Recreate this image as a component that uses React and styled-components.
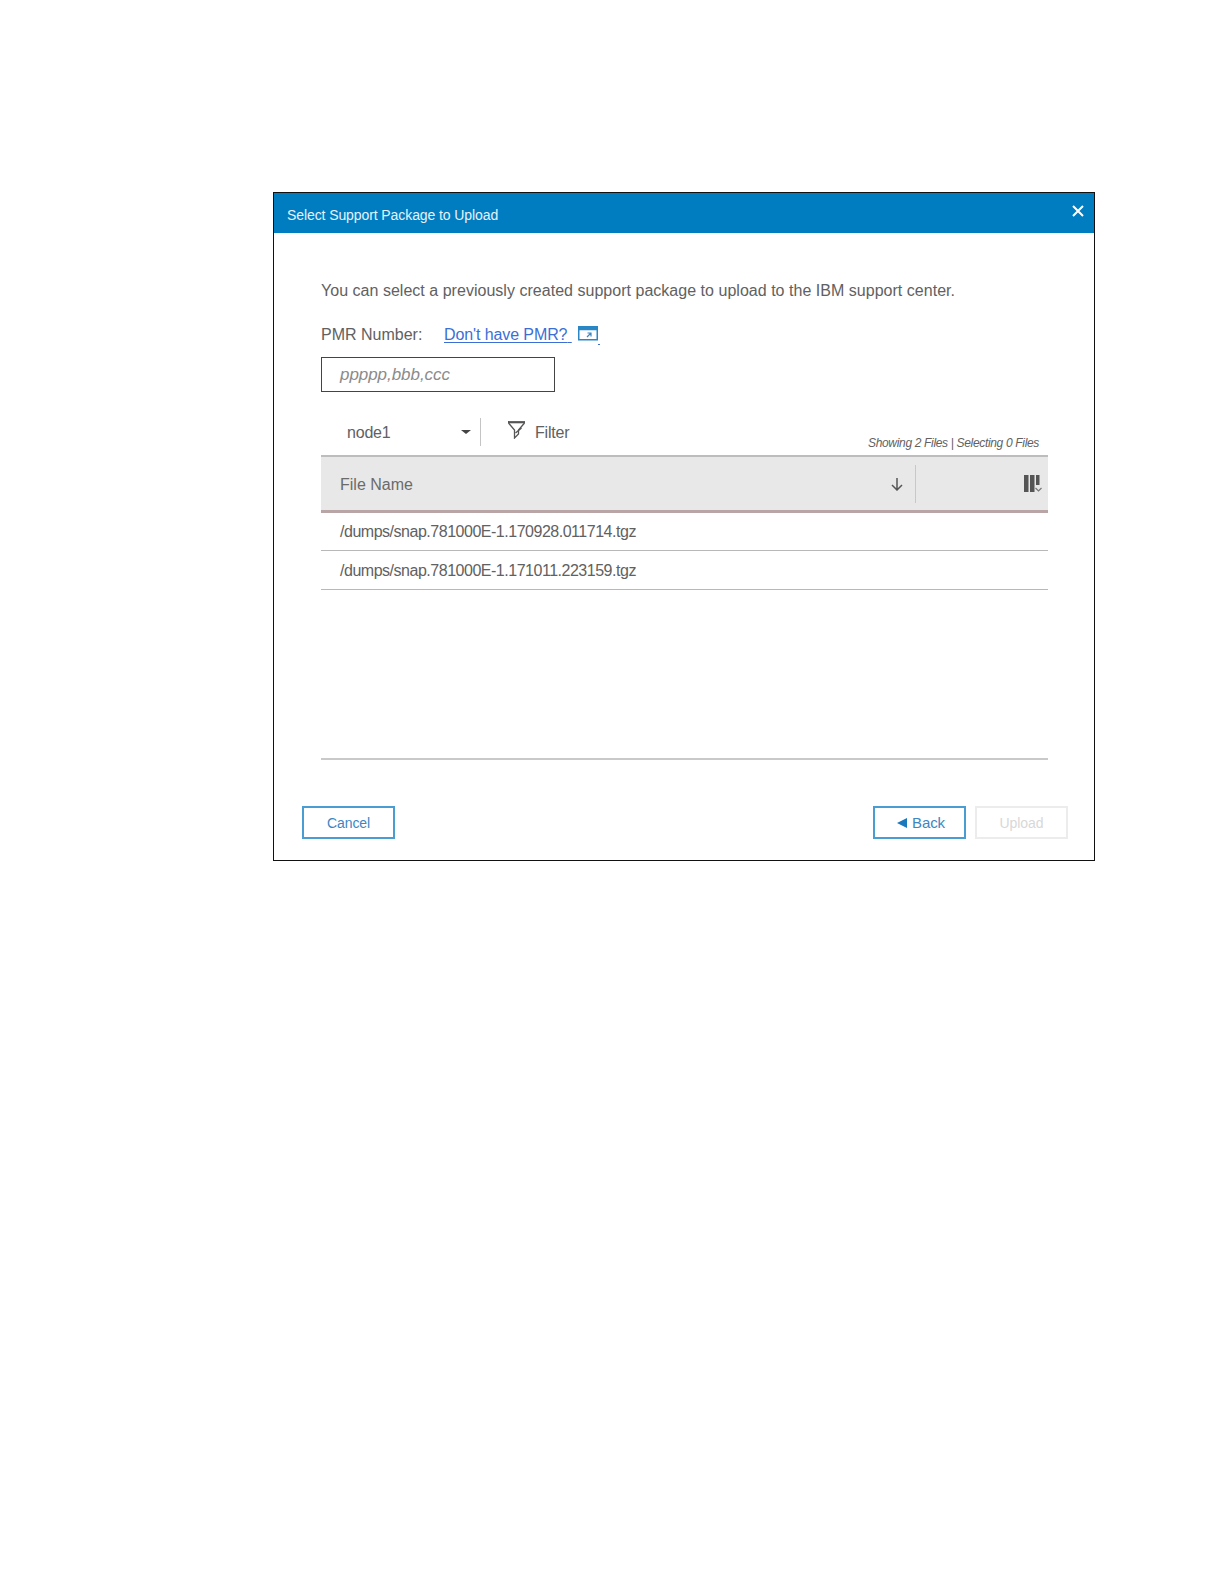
import React from 'react';
import styled, { createGlobalStyle } from 'styled-components';

const GlobalStyle = createGlobalStyle`
  body {
    margin: 0;
    background: #fff;
    font-family: "Liberation Sans", Arial, sans-serif;
  }
`;

const Page = styled.div`
  width: 1224px;
  height: 1584px;
  padding: 192px 0 0 273px;
  box-sizing: border-box;
`;

const Dialog = styled.div`
  width: 822px;
  height: 669px;
  box-sizing: border-box;
  border: 1px solid #111;
  display: flex;
  flex-direction: column;
`;

const Header = styled.div`
  height: 40px;
  flex: none;
  background: #007cc1;
  color: #e6f2f9;
  display: flex;
  justify-content: space-between;
  padding: 0 10px 0 13px;
  font-size: 14px;
  letter-spacing: -0.09px;
  line-height: 44px;
`;

const Close = styled.svg`
  width: 12px;
  height: 12px;
  margin-top: 12px;
`;

const Body = styled.div`
  flex: 1;
  display: flex;
  flex-direction: column;
  padding: 48px 46px 0 47px;
  color: #616161;
`;

const Intro = styled.p`
  margin: 0;
  font-size: 16px;
  line-height: 20px;
  letter-spacing: 0.025px;
`;

const PmrRow = styled.div`
  display: flex;
  align-items: center;
  height: 20px;
  margin-top: 24px;
  font-size: 16px;
`;

const PmrLabel = styled.span`
  width: 123px;
`;

const HelpLink = styled.a`
  display: flex;
  align-items: center;
  color: #3b6fd6;
  letter-spacing: -0.1px;
  text-decoration: underline;
  text-underline-offset: 2px;
  svg {
    margin: -3px 0 0 6px;
  }
`;

const LinkTail = styled.span`
  display: inline-block;
  width: 2px;
  height: 1px;
  margin-top: 18px;
  background: #3b6fd6;
`;

const PmrInput = styled.div`
  width: 234px;
  height: 35px;
  margin-top: 12px;
  box-sizing: border-box;
  border: 1px solid #444;
  padding-left: 18px;
  font-size: 17px;
  font-style: italic;
  line-height: 33px;
  letter-spacing: -0.05px;
  color: #8b8b8b;
`;

const Toolbar = styled.div`
  height: 63px;
  display: flex;
  align-items: flex-start;
  padding-top: 26px;
  box-sizing: border-box;
  position: relative;
`;

const NodeSelect = styled.div`
  width: 160px;
  height: 28px;
  box-sizing: border-box;
  padding-left: 26px;
  display: flex;
  justify-content: space-between;
  align-items: center;
  font-size: 16px;
  letter-spacing: -0.2px;
  border-right: 1px solid #c4c4c4;
`;

const NodeLabel = styled.span`
  margin-top: 1px;
`;

const Caret = styled.span`
  width: 0;
  height: 0;
  margin-right: 9px;
  border-left: 5px solid transparent;
  border-right: 5px solid transparent;
  border-top: 4px solid #444;
`;

const FilterButton = styled.div`
  display: flex;
  align-items: center;
  height: 28px;
  padding-left: 26px;
  font-size: 16px;
  letter-spacing: -0.2px;
  svg {
    margin: -4px 9px 0 0;
  }
`;

const FilterLabel = styled.span`
  margin-top: 1px;
`;

const Counter = styled.div`
  position: absolute;
  right: 9px;
  top: 44px;
  font-size: 12px;
  font-style: italic;
  letter-spacing: -0.33px;
  line-height: 14px;
`;

const TableHead = styled.div`
  height: 58px;
  flex: none;
  box-sizing: border-box;
  background: #e8e8e8;
  border-top: 2px solid #bdbdbd;
  border-bottom: 3px solid #b9a5a5;
  display: flex;
  align-items: center;
  padding-left: 19px;
  font-size: 16px;
  color: #6b6b6b;
`;

const HeadTitle = styled.span`
  flex: 1;
  margin-top: 3px;
`;

const SortIcon = styled.svg`
  margin-right: 11px;
`;

const HeadDivider = styled.span`
  width: 1px;
  height: 38px;
  background: #c8c8c8;
`;

const ColumnIcon = styled.svg`
  margin: 0 5px 0 107px;
`;

const TableBody = styled.div`
  height: 247px;
  flex: none;
  box-sizing: border-box;
  border-bottom: 2px solid #c9c9c9;
`;

const Row = styled.div`
  height: ${(p) => (p.$first ? 38 : 39)}px;
  box-sizing: border-box;
  border-bottom: 1px solid #b8b8b8;
  padding-left: 19px;
  font-size: 16px;
  line-height: ${(p) => (p.$first ? 37 : 39)}px;
  letter-spacing: -0.48px;
`;

const Footer = styled.div`
  display: flex;
  align-items: center;
  gap: 9px;
  padding: 46px 26px 0 28px;
  margin: 0 -46px 0 -47px;
`;

const Button = styled.div`
  width: 93px;
  height: 33px;
  box-sizing: border-box;
  border: 2px solid ${(p) => (p.$disabled ? '#ececec' : '#4a9dd2')};
  color: ${(p) => (p.$disabled ? '#d8d8d8' : '#3d86c2')};
  display: flex;
  align-items: center;
  justify-content: center;
  gap: 5px;
  font-size: ${(p) => p.$size || 14}px;
  letter-spacing: -0.1px;
`;

const Spacer = styled.div`
  flex: 1;
`;

const BackArrow = styled.span`
  width: 0;
  height: 0;
  margin-left: 3px;
  border-top: 5px solid transparent;
  border-bottom: 5px solid transparent;
  border-right: 10px solid #1a78bd;
`;

export default function App() {
  return (
    <Page>
      <GlobalStyle />
      <Dialog>
        <Header>
          <span>Select Support Package to Upload</span>
          <Close viewBox="0 0 12 12">
            <path d="M1 1l10 10M11 1L1 11" stroke="#fff" strokeWidth="2" fill="none" />
          </Close>
        </Header>
        <Body>
          <Intro>You can select a previously created support package to upload to the IBM support center.</Intro>
          <PmrRow>
            <PmrLabel>PMR Number:</PmrLabel>
            <HelpLink>
              Don't have PMR?{'\u00a0'}
              <svg width="20" height="15" viewBox="0 0 20 15">
                <rect x="0.75" y="0.75" width="18.5" height="13" fill="#fff" stroke="#2a86c4" strokeWidth="1.5" />
                <rect x="0.75" y="0.75" width="18.5" height="3.5" fill="#2a86c4" />
                <path d="M9 11l4-4M9.5 7H13v3.5" stroke="#3f86bd" strokeWidth="1.2" fill="none" />
              </svg>
              <LinkTail />
            </HelpLink>
          </PmrRow>
          <PmrInput>ppppp,bbb,ccc</PmrInput>
          <Toolbar>
            <NodeSelect>
              <NodeLabel>node1</NodeLabel>
              <Caret />
            </NodeSelect>
            <FilterButton>
              <svg width="19" height="18" viewBox="0 0 19 18">
                <path d="M1 1.2h17" stroke="#555" strokeWidth="2.2" />
                <path d="M1.5 2l6 7v8l4-4V9l6-7" stroke="#555" strokeWidth="1.3" fill="none" />
                <path d="M8.5 12l6-5" stroke="#555" strokeWidth="1.3" />
              </svg>
              <FilterLabel>Filter</FilterLabel>
            </FilterButton>
            <Counter>Showing 2 Files | Selecting 0 Files</Counter>
          </Toolbar>
          <TableHead>
            <HeadTitle>File Name</HeadTitle>
            <SortIcon width="14" height="14" viewBox="0 0 14 14">
              <path d="M7 1v12M2 8l5 5 5-5" stroke="#555" strokeWidth="1.5" fill="none" />
            </SortIcon>
            <HeadDivider />
            <ColumnIcon width="20" height="20" viewBox="0 0 20 20">
              <rect x="1" y="1" width="4.5" height="17" fill="#555" />
              <rect x="7" y="1" width="4.5" height="17" fill="#555" />
              <rect x="13" y="1" width="3.5" height="10" fill="#555" />
              <path d="M12.5 14l3 3 3-3" stroke="#777" strokeWidth="1.2" fill="none" />
            </ColumnIcon>
          </TableHead>
          <TableBody>
            <Row $first>/dumps/snap.781000E-1.170928.011714.tgz</Row>
            <Row>/dumps/snap.781000E-1.171011.223159.tgz</Row>
          </TableBody>
          <Footer>
            <Button>Cancel</Button>
            <Spacer />
            <Button $size={15}>
              <BackArrow />
              Back
            </Button>
            <Button $disabled>Upload</Button>
          </Footer>
        </Body>
      </Dialog>
    </Page>
  );
}
